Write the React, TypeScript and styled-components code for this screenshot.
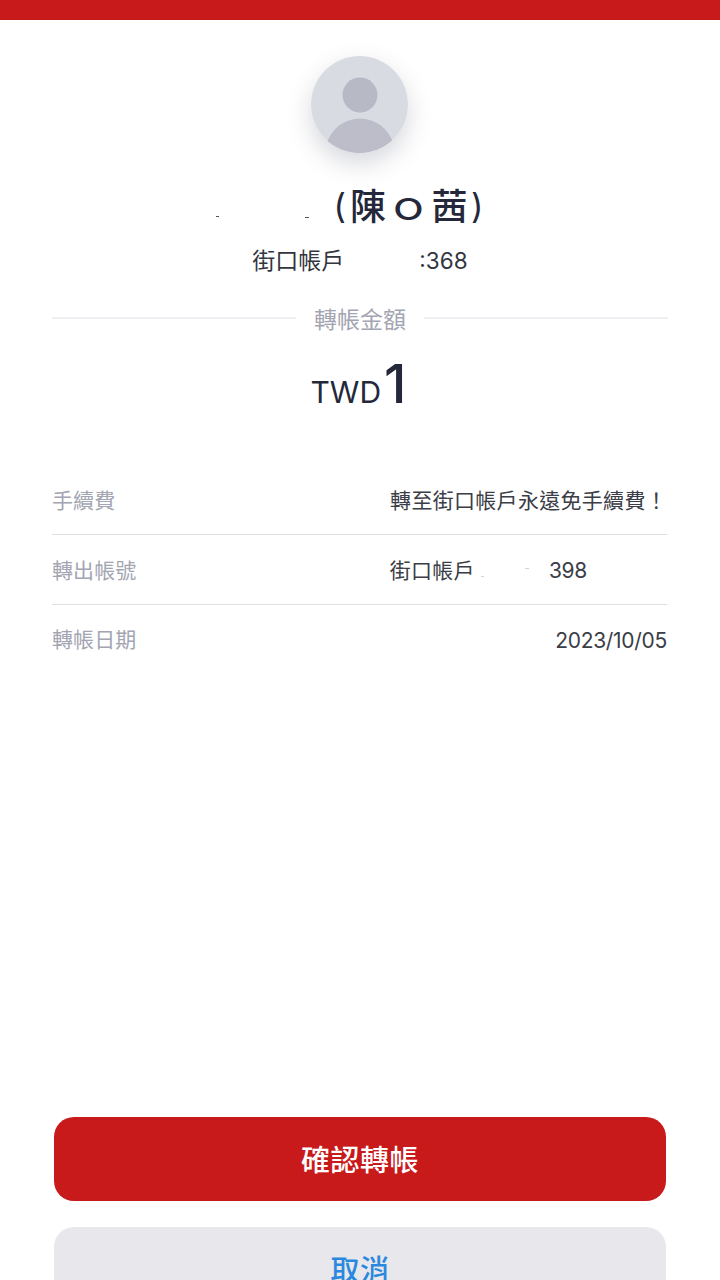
import React from "react";
import styled, { createGlobalStyle } from "styled-components";

const Global = createGlobalStyle`
  html, body { margin: 0; padding: 0; background: #fff; }
  body { font-family: Inter, "Noto Sans CJK TC", sans-serif; }
`;

const Page = styled.div`
  width: 720px;
  height: 1280px;
  overflow: hidden;
  background: #fff;
  display: flex;
  flex-direction: column;
`;

const TopBar = styled.div`
  height: 20px;
  flex: none;
  background: #c8191b;
`;

const Header = styled.header`
  display: flex;
  flex-direction: column;
  align-items: center;
  padding-top: 36px;
`;

const Avatar = styled.div`
  width: 97px;
  height: 97px;
  margin-right: 1px;
  border-radius: 50%;
  box-shadow: 0 10px 24px rgba(70, 74, 95, 0.22);
  svg { display: block; }
`;

const NameRow = styled.div`
  display: flex;
  align-items: stretch;
  justify-content: center;
  width: 100%;
  height: 50px;
  margin-top: 28px;
  padding-right: 22px;
  box-sizing: border-box;
`;

const Name = styled.h1`
  margin: 0;
  font-size: 36px;
  line-height: 50px;
  font-weight: 500;
  color: #24283a;
  font-family: inherit;
  white-space: nowrap;
`;

const Paren = styled.span<{ $before?: number; $after?: number }>`
  font-size: 34px;
  font-weight: 400;
  vertical-align: 2px;
  margin-left: ${(p) => p.$before ?? 0}px;
  margin-right: ${(p) => p.$after ?? 0}px;
`;

const MaskedInitial = styled.span`
  display: inline-block;
  width: 29px;
  margin: 0 8.5px 0 8px;
  font-size: 30px;
  font-weight: 500;
  text-align: center;
  transform: scaleX(1.32);
`;

const Account = styled.div`
  display: flex;
  align-items: center;
  height: 32px;
  margin-top: 14px;
  font-size: 23px;
  line-height: 32px;
  color: #33353f;
`;

const AccountTail = styled.span`
  font-size: 22.5px;
`;

/* Blanked-out part of a masked name or account number, with the specks the redaction left behind. */
const Masked = styled.span<{ $w: number; $specks?: string; $tone?: string }>`
  display: inline-block;
  flex: none;
  align-self: stretch;
  width: ${(p) => p.$w}px;
  background-repeat: no-repeat;
  background-image: ${(p) =>
    p.$specks
      ? `linear-gradient(${p.$tone}, ${p.$tone}), linear-gradient(${p.$tone}, ${p.$tone})`
      : "none"};
  background-position: ${(p) => p.$specks || "0 0"};
  background-size: 3px 1px, 4px 1px;
`;

const Divider = styled.div`
  display: flex;
  align-items: center;
  gap: 18px;
  margin: 25px 52px 0;
  height: 32px;
  font-size: 23px;
  color: #a3a5b2;
  &::before, &::after {
    content: "";
    flex: 1;
    height: 2px;
    background: #eeeff2;
  }
`;

const Amount = styled.div`
  display: flex;
  justify-content: center;
  align-items: baseline;
  margin-top: 15px;
  padding-right: 3px;
  height: 70px;
  color: #24283a;
`;

const Currency = styled.span`
  font-size: 30px;
  font-weight: 400;
`;

const Value = styled.span`
  margin-left: 3px;
  font-size: 54px;
  line-height: 70px;
  font-weight: 500;
`;

const List = styled.section`
  margin: 46px 53px 0 52px;
`;

const Row = styled.div`
  display: flex;
  align-items: center;
  justify-content: space-between;
  height: 70px;
  padding-bottom: 2px;
  box-sizing: border-box;
  font-size: 21px;
  border-bottom: 1px solid #dedfe3;
  &:last-child {
    border-bottom: 0;
    padding-bottom: 4px;
  }
`;

const Label = styled.span`
  color: #a3a5b2;
  letter-spacing: 0.1px;
`;

const RowValue = styled.span<{ $inset?: number }>`
  display: flex;
  align-items: center;
  align-self: stretch;
  margin-right: ${(p) => p.$inset ?? 0}px;
  color: #3b3d47;
  white-space: nowrap;
  letter-spacing: 0.3px;
`;

const Digits = styled.span`
  letter-spacing: -0.3px;
  margin-top: 4px;
`;

const Actions = styled.footer`
  display: flex;
  flex-direction: column;
  gap: 26px;
  margin: 442px 54px 0;
`;

const Button = styled.button<{ $primary?: boolean }>`
  flex: none;
  height: 84px;
  padding: 0 0 3px;
  border: 0;
  border-radius: 20px;
  background: ${(p) => (p.$primary ? "#c8191b" : "#e8e8ec")};
  color: ${(p) => (p.$primary ? "#fff" : "#2b88de")};
  font-family: inherit;
  font-size: 29px;
  font-weight: 500;
  letter-spacing: 0.5px;
`;

export default function App() {
  return (
    <Page>
      <Global />
      <TopBar />
      <Header>
        <Avatar>
          <svg width="97" height="97" viewBox="0 0 97 97">
            <defs>
              <clipPath id="avatarClip">
                <circle cx="48.5" cy="48.5" r="48.5" />
              </clipPath>
            </defs>
            <circle cx="48.5" cy="48.5" r="48.5" fill="#d9dbe3" />
            <g clipPath="url(#avatarClip)">
              <circle cx="49" cy="39" r="17.5" fill="#b7b9c4" />
              <ellipse cx="49" cy="98" rx="35" ry="35.5" fill="#bcbdc9" />
            </g>
          </svg>
        </Avatar>
        <NameRow>
          <Masked $w={119} $specks="1px 35px, 90px 36px" $tone="#555" />
          <Name>
            <Paren $after={4}>(</Paren>陳<MaskedInitial>O</MaskedInitial>茜<Paren $before={3.5}>)</Paren>
          </Name>
        </NameRow>
        <Account>
          街口帳戶
          <Masked $w={75} />
          <AccountTail>:368</AccountTail>
        </Account>
      </Header>
      <Divider>轉帳金額</Divider>
      <Amount>
        <Currency>TWD</Currency>
        <Value>1</Value>
      </Amount>
      <List>
        <Row>
          <Label>手續費</Label>
          <RowValue>轉至街口帳戶永遠免手續費！</RowValue>
        </Row>
        <Row>
          <Label>轉出帳號</Label>
          <RowValue $inset={80}>
            街口帳戶
            <Masked $w={74} $specks="6px 41px, 50px 33px" $tone="#d4d4d8" />
            <Digits>398</Digits>
          </RowValue>
        </Row>
        <Row>
          <Label>轉帳日期</Label>
          <RowValue>
            <Digits>2023/10/05</Digits>
          </RowValue>
        </Row>
      </List>
      <Actions>
        <Button $primary>確認轉帳</Button>
        <Button>取消</Button>
      </Actions>
    </Page>
  );
}
